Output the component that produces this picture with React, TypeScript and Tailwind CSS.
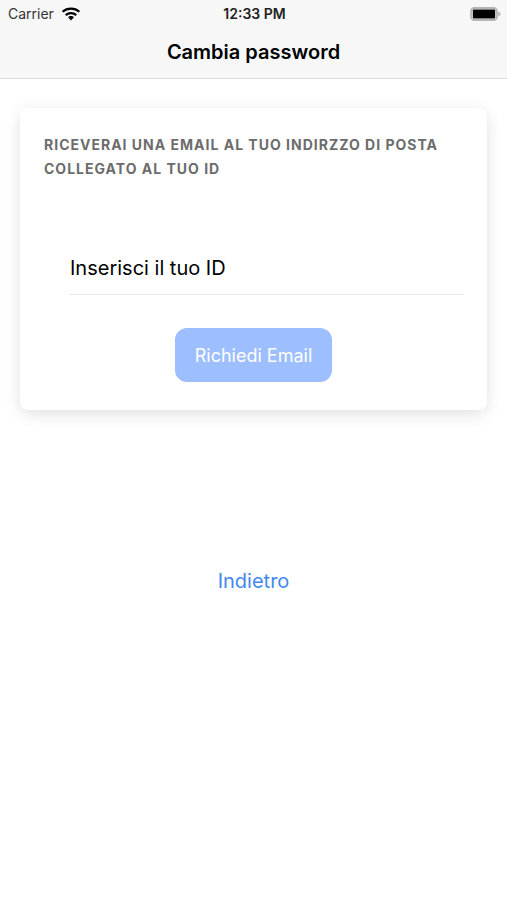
import { useState } from 'react';

const WifiIcon = () => (
  <svg viewBox="0 0 20 14" className="h-[14px] w-5" fill="none" stroke="#000" aria-hidden="true">
    <path d="M1.6 4.8C6.3 0.6 13.7 0.6 18.4 4.8" strokeWidth="2.2" />
    <path d="M4.7 8.1C7.7 5.4 12.3 5.4 15.3 8.1" strokeWidth="2.1" />
    <path d="M10 9.1C8.8 9.1 7.8 9.6 7.1 10.3L10 13.5L12.9 10.3C12.2 9.6 11.2 9.1 10 9.1Z" fill="#000" stroke="none" />
  </svg>
);

const BatteryIcon = () => (
  <svg viewBox="0 0 31 14" className="h-[14px] w-[31px]" aria-hidden="true">
    <rect x="1" y="1" width="26" height="12" rx="3.4" fill="none" stroke="#b4b4b4" strokeWidth="1.8" />
    <rect x="2.8" y="2.6" width="22.4" height="8.8" rx="1" fill="#000" />
    <path d="M28.3 4.5C29.6 5 30.5 5.9 30.5 7S29.6 9 28.3 9.5Z" fill="#b4b4b4" />
  </svg>
);

const StatusBar = () => (
  <div className="grid grid-cols-3 items-center pt-1 pr-1.5 pl-2 text-sm leading-5">
    <div className="flex items-center gap-[7px] text-[#333]">
      <span>Carrier</span>
      <WifiIcon />
    </div>
    <div className="text-center font-semibold text-[#222]">12:33 PM</div>
    <div className="flex justify-end">
      <BatteryIcon />
    </div>
  </div>
);

const App = () => {
  const [userId, setUserId] = useState('');

  return (
    <div className="min-h-screen bg-white font-['Inter',sans-serif] text-black">
      <header className="border-b border-[#dcdcdc] bg-[#f7f7f7]">
        <StatusBar />
        <h1 className="pt-[13px] pb-[11px] text-center text-xl leading-[30px] font-semibold">Cambia password</h1>
      </header>

      <main className="flex flex-col px-5 pt-[29px]">
        <form
          className="rounded-lg px-6 pt-[25px] pb-7 shadow-[0_4px_16px_rgba(0,0,0,0.12)]"
          onSubmit={(e) => e.preventDefault()}
        >
          <p className="text-sm leading-6 font-bold tracking-[1px] text-[#6c6c6c] uppercase">
            Riceverai una email al tuo indirzzo di posta collegato al tuo ID
          </p>
          <div className="mt-[60px] ml-[26px] border-b border-[#e6e6e6]">
            <input
              type="text"
              aria-label="Inserisci il tuo ID"
              placeholder="Inserisci il tuo ID"
              value={userId}
              onChange={(e) => setUserId(e.target.value)}
              className="h-[53px] w-full bg-transparent text-xl outline-none placeholder:text-black"
            />
          </div>
          <div className="mt-[33px] flex justify-center">
            <button
              type="submit"
              className="h-[54px] rounded-xl bg-[#9dbeff] px-5 pt-px text-lg text-white"
            >
              Richiedi Email
            </button>
          </div>
        </form>

        <a href="#" className="mt-[155px] self-center text-xl leading-8 text-[#4288f0]">
          Indietro
        </a>
      </main>
    </div>
  );
};

export default App;
